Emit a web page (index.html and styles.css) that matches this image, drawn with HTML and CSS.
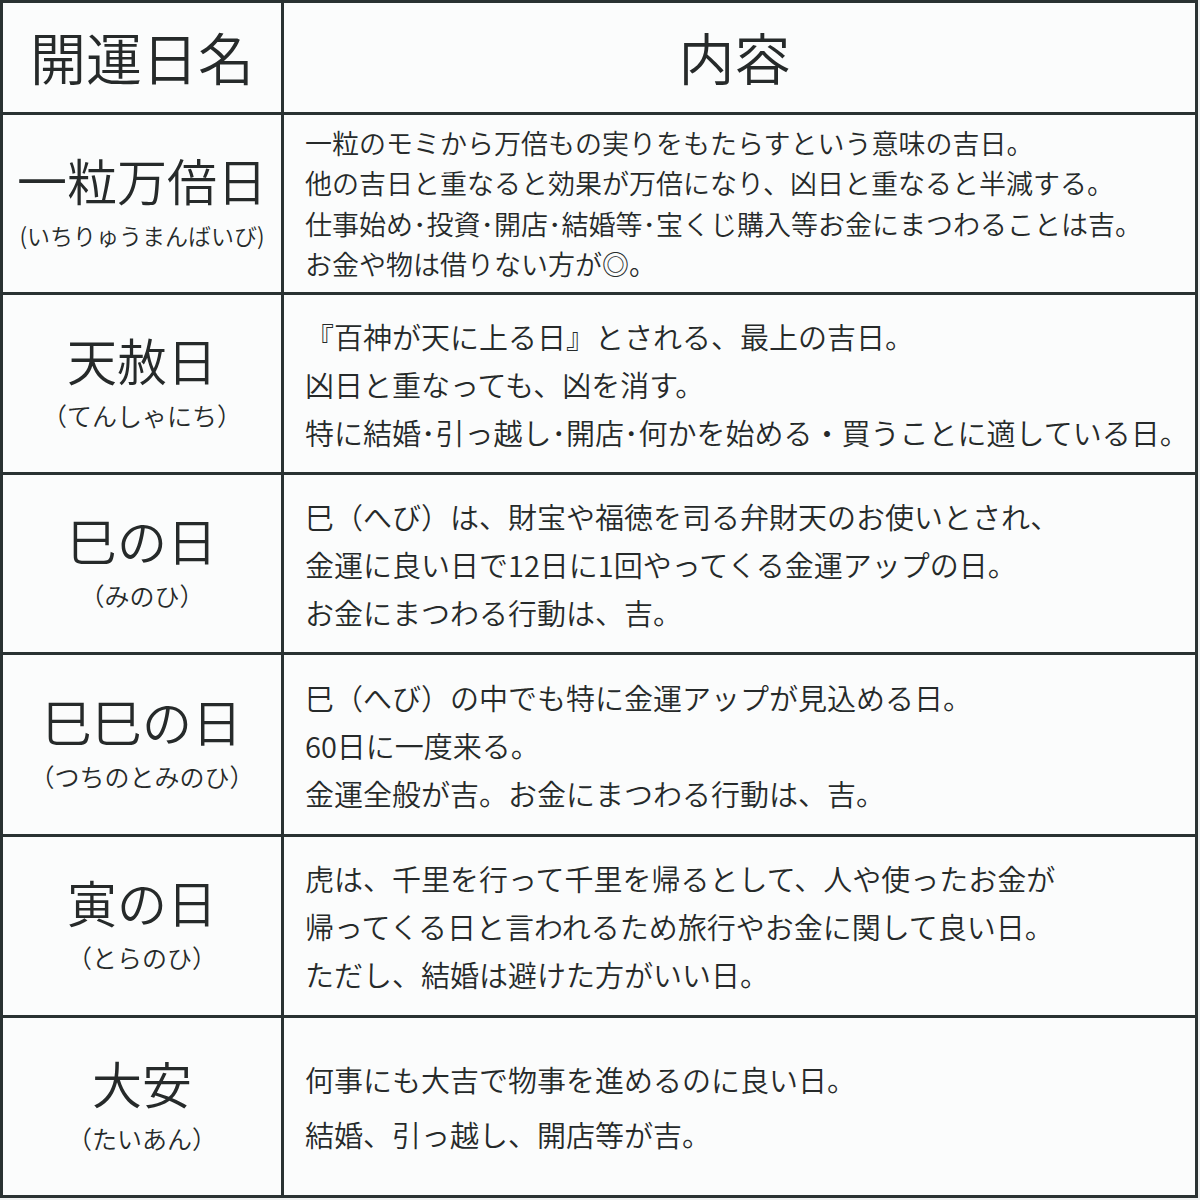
FILE: index.html
```html
<!DOCTYPE html>
<html lang="ja">
<head>
<meta charset="utf-8">
<link rel="stylesheet" href="styles.css">
</head>
<body>
<div class="table">
  <div class="cell head">開運日名</div>
  <div class="cell head head-right">内容</div>

  <div class="cell name"><div class="title">一粒万倍日</div><div class="sub small">(いちりゅうまんばいび)</div></div>
  <div class="cell desc r1">
    <p>一粒のモミから万倍もの実りをもたらすという意味の吉日。</p>
    <p>他の吉日と重なると効果が万倍になり、凶日と重なると半減する。</p>
    <p>仕事始め･投資･開店･結婚等･宝くじ購入等お金にまつわることは吉。</p>
    <p>お金や物は借りない方が◎。</p>
  </div>

  <div class="cell name"><div class="title">天赦日</div><div class="sub">（てんしゃにち）</div></div>
  <div class="cell desc">
    <p>『百神が天に上る日』とされる、最上の吉日。</p>
    <p>凶日と重なっても、凶を消す。</p>
    <p>特に結婚･引っ越し･開店･何かを始める・買うことに適している日。</p>
  </div>

  <div class="cell name"><div class="title">巳の日</div><div class="sub">（みのひ）</div></div>
  <div class="cell desc">
    <p>巳（へび）は、財宝や福徳を司る弁財天のお使いとされ、</p>
    <p>金運に良い日で12日に1回やってくる金運アップの日。</p>
    <p>お金にまつわる行動は、吉。</p>
  </div>

  <div class="cell name"><div class="title">巳巳の日</div><div class="sub">（つちのとみのひ）</div></div>
  <div class="cell desc">
    <p>巳（へび）の中でも特に金運アップが見込める日。</p>
    <p>60日に一度来る。</p>
    <p>金運全般が吉。お金にまつわる行動は、吉。</p>
  </div>

  <div class="cell name"><div class="title">寅の日</div><div class="sub">（とらのひ）</div></div>
  <div class="cell desc">
    <p>虎は、千里を行って千里を帰るとして、人や使ったお金が</p>
    <p>帰ってくる日と言われるため旅行やお金に関して良い日。</p>
    <p>ただし、結婚は避けた方がいい日。</p>
  </div>

  <div class="cell name"><div class="title">大安</div><div class="sub">（たいあん）</div></div>
  <div class="cell desc r6">
    <p>何事にも大吉で物事を進めるのに良い日。</p>
    <p>結婚、引っ越し、開店等が吉。</p>
  </div>
</div>
</body>
</html>
```

FILE: styles.css
```css
html, body {
  margin: 0;
  padding: 0;
  background: #eef0f0;
}
body {
  width: 1200px;
  height: 1200px;
  font-family: "Noto Sans CJK JP", "Noto Sans", sans-serif;
  font-weight: 350;
  color: #262a2a;
}
.table {
  width: 1198px;
  box-sizing: border-box;
  padding: 3px;
  background: #2a3232;
  display: grid;
  grid-template-columns: 278px 911px;
  grid-template-rows: 109px 177px 177px 177px 179px 178px 177px;
  gap: 3px;
}
.cell {
  background: #fbfcfc;
  display: flex;
  flex-direction: column;
  justify-content: center;
  align-items: center;
}
.head {
  font-size: 56px;
  line-height: 1;
  padding-bottom: 4px;
  box-sizing: border-box;
}
.head-right {
  padding-right: 10px;
}
.name .title {
  font-size: 50px;
  line-height: 62px;
  white-space: nowrap;
}
.name .sub {
  font-size: 25px;
  line-height: 50px;
  white-space: nowrap;
}
.name .sub.small {
  font-size: 23px;
}
.desc {
  align-items: flex-start;
  padding-left: 21px;
  box-sizing: border-box;
}
.desc p {
  margin: 0;
  font-size: 29px;
  line-height: 48px;
  white-space: nowrap;
}
.desc.r1 p {
  font-size: 27px;
  line-height: 40.5px;
}
.desc.r6 p {
  line-height: 55px;
}
```
